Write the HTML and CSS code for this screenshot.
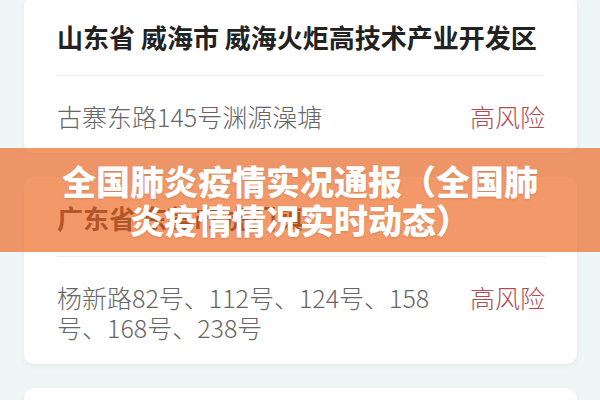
FILE: index.html
```html
<!DOCTYPE html>
<html lang="zh-CN">
<head>
  <meta charset="UTF-8" />
  <title>全国肺炎疫情实况通报</title>
  <link rel="stylesheet" href="styles.css">
</head>
<body>
  <div class="list">
    <div class="card">
      <div class="area">山东省 威海市 威海火炬高技术产业开发区</div>
      <div class="spot">
        <div class="spot-name">古寨东路145号渊源澡塘</div>
        <div class="risk">高风险</div>
      </div>
    </div>

    <div class="card">
      <div class="area">广东省 东莞市 虎门镇</div>
      <div class="spot">
        <div class="spot-name">杨新路82号、112号、124号、158号、168号、238号</div>
        <div class="risk">高风险</div>
      </div>
    </div>

    <div class="card placeholder"></div>
  </div>

  <!-- title banner over the list -->
  <div class="banner">
    <div class="banner-title">全国肺炎疫情实况通报（全国肺炎疫情情况实时动态）</div>
  </div>
</body>
</html>
```

FILE: styles.css
```css
body {
  margin: 0;
  height: 400px;
  overflow: hidden;
  position: relative;
  background: #eef6f6;
  font-family: "Noto Sans CJK SC", "Noto Sans", sans-serif;
}

.list {
  display: flex;
  flex-direction: column;
  gap: 24px;
  margin: -4px 23px 0 24px;
}

.card {
  background: #ffffff;
  border-radius: 10px;
  padding: 0 32px 0 33px;
  box-shadow: 0 2px 6px rgba(0, 0, 0, 0.05);
}

.card.placeholder {
  height: 80px;
}

.area {
  padding: 26px 0 23px;
  line-height: 30px;
  font-size: 26px;
  font-weight: 700;
  color: #222222;
  border-bottom: 1px solid #eeeeee;
  white-space: nowrap;
}

.spot {
  display: flex;
  justify-content: space-between;
  align-items: flex-start;
  gap: 30px;
  padding: 25px 0 22px;
}

.spot-name {
  flex: 0 1 385px;
  font-size: 25px;
  line-height: 30px;
  color: #666666;
  font-weight: 300;
}

.risk {
  flex: 0 0 auto;
  font-size: 25px;
  line-height: 30px;
  color: #b04b55;
  font-weight: 300;
}

/* === BANNER === */
.banner {
  position: absolute;
  left: 0;
  right: 0;
  top: 148px;
  height: 104px;
  display: flex;
  align-items: center;
  justify-content: center;
  background: rgba(236, 108, 42, 0.7);
}

.banner-title {
  width: 490px;
  text-align: center;
  font-size: 34px;
  line-height: 39px;
  font-weight: 900;
  color: #ffffff;
  text-shadow: 0 1px 2px rgba(120, 50, 10, 0.2);
}
```
